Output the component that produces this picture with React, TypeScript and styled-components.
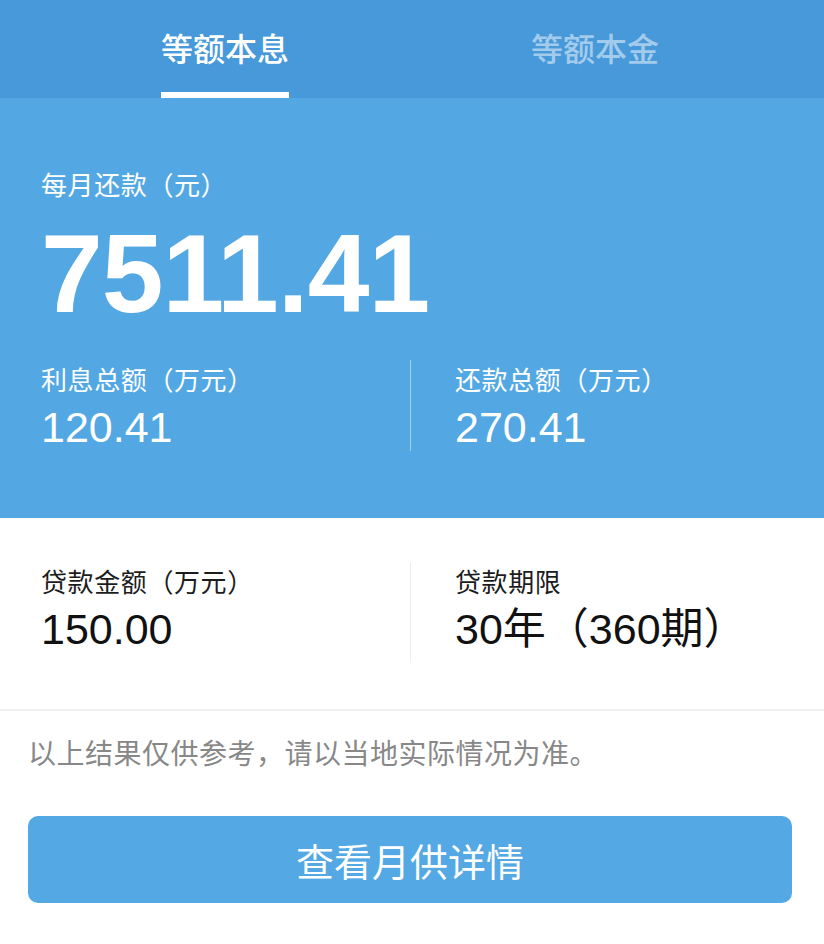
import styled, { createGlobalStyle } from 'styled-components';

const GlobalStyle = createGlobalStyle`
  * {
    box-sizing: border-box;
  }
  body {
    margin: 0;
    background: #ffffff;
    font-family: 'Liberation Sans', 'Noto Sans CJK SC', sans-serif;
  }
`;

const Page = styled.div`
  width: 824px;
  min-height: 944px;
  background: #ffffff;
`;

const Tabs = styled.nav`
  height: 98px;
  display: flex;
  justify-content: space-between;
  padding: 0 165px 0 161px;
  background: #4899da;
`;

const Tab = styled.div<{ $active?: boolean }>`
  width: 128px;
  height: 100%;
  display: flex;
  align-items: center;
  justify-content: center;
  padding-top: 2px;
  border-bottom: 6px solid ${({ $active }) => ($active ? '#ffffff' : 'transparent')};
  font-family: 'Noto Sans CJK SC', sans-serif;
  font-size: 32px;
  font-weight: 500;
  color: ${({ $active }) => ($active ? '#ffffff' : 'rgba(255, 255, 255, 0.5)')};
  white-space: nowrap;
`;

const Summary = styled.section`
  background: #53a8e4;
  color: #ffffff;
  padding: 69px 45px 67px 41px;
`;

const Label = styled.p<{ $dark?: boolean }>`
  margin: 0;
  font-family: 'Noto Sans CJK SC', sans-serif;
  font-size: 26px;
  line-height: 34px;
  letter-spacing: 0.6px;
  color: ${({ $dark }) => ($dark ? '#1c1c1c' : '#ffffff')};
  white-space: nowrap;
`;

const Monthly = styled.p`
  margin: 18px 0 0;
  font-size: 111px;
  font-weight: 700;
  line-height: 110px;
  letter-spacing: -1px;
`;

const Row = styled.div<{ $light?: boolean }>`
  display: grid;
  grid-template-columns: 1fr 1fr;
  min-height: ${({ $light }) => ($light ? '101px' : '91px')};
  margin-top: ${({ $light }) => ($light ? '0' : '31px')};
  --divider: ${({ $light }) => ($light ? '#eeeeee' : 'rgba(255, 255, 255, 0.45)')};
`;

const Stat = styled.div`
  padding-top: 2px;
  & + & {
    border-left: 1.5px solid var(--divider);
    padding-left: 44px;
  }
`;

const Value = styled.p<{ $dark?: boolean }>`
  margin: 7px 0 0;
  font-size: 43px;
  line-height: 48px;
  color: ${({ $dark }) => ($dark ? '#111111' : '#ffffff')};
  white-space: nowrap;
`;

const Details = styled.section`
  padding: 44px 45px 46px 41px;
  border-bottom: 2px solid #efefef;
`;

const Notice = styled.p`
  margin: 0;
  padding: 21px 28px 0;
  font-family: 'Noto Sans CJK SC', sans-serif;
  font-size: 28px;
  line-height: 40px;
  letter-spacing: 0.5px;
  color: #888888;
  white-space: nowrap;
`;

const Button = styled.button`
  display: flex;
  align-items: center;
  justify-content: center;
  width: 764px;
  height: 87px;
  margin: 44px 0 0 28px;
  border: none;
  border-radius: 10px;
  background: #54a8e3;
  color: #ffffff;
  font-family: 'Noto Sans CJK SC', sans-serif;
  font-size: 38px;
  cursor: pointer;
`;

export default function App() {
  return (
    <Page>
      <GlobalStyle />
      <Tabs>
        <Tab $active>等额本息</Tab>
        <Tab>等额本金</Tab>
      </Tabs>
      <Summary>
        <Label>每月还款（元）</Label>
        <Monthly>7511.41</Monthly>
        <Row>
          <Stat>
            <Label>利息总额（万元）</Label>
            <Value>120.41</Value>
          </Stat>
          <Stat>
            <Label>还款总额（万元）</Label>
            <Value>270.41</Value>
          </Stat>
        </Row>
      </Summary>
      <Details>
        <Row $light>
          <Stat>
            <Label $dark>贷款金额（万元）</Label>
            <Value $dark>150.00</Value>
          </Stat>
          <Stat>
            <Label $dark>贷款期限</Label>
            <Value $dark>30年（360期）</Value>
          </Stat>
        </Row>
      </Details>
      <Notice>以上结果仅供参考，请以当地实际情况为准。</Notice>
      <Button>查看月供详情</Button>
    </Page>
  );
}
